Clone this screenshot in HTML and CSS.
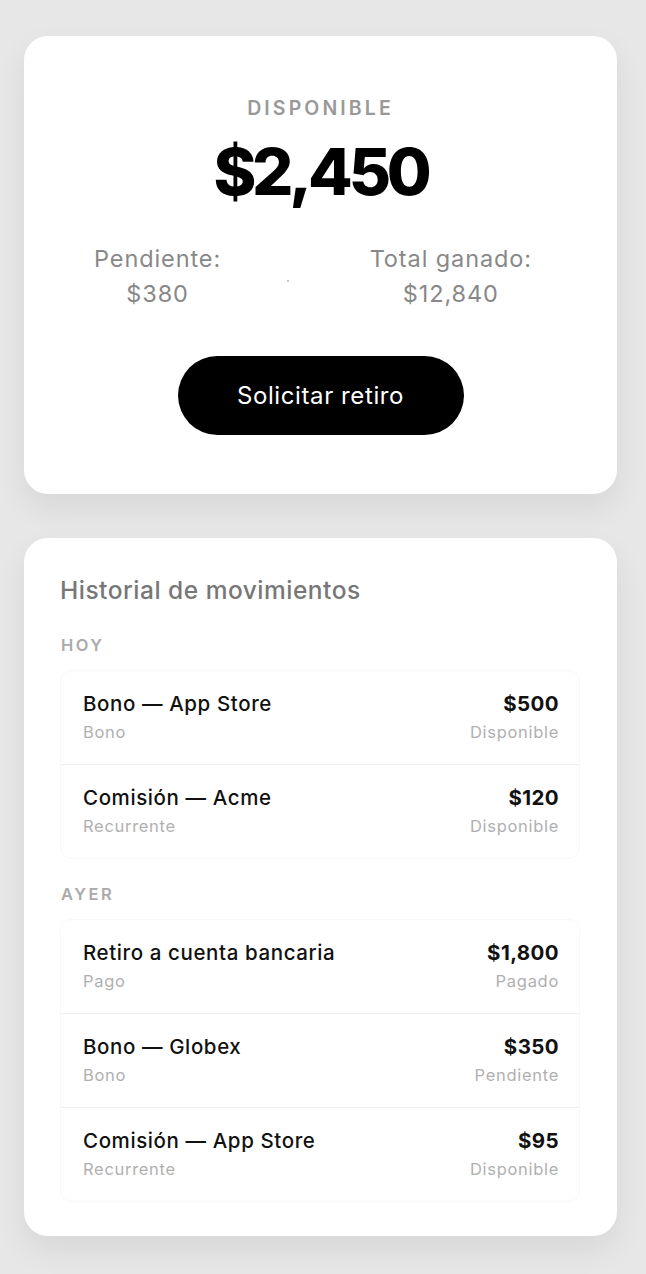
FILE: index.html
```html
<!DOCTYPE html>
<html lang="es">
<head>
  <meta charset="UTF-8" />
  <title>Saldo – Retiros</title>
  <link rel="stylesheet" href="styles.css">
</head>
<body>

  <!-- BALANCE CARD -->
  <section class="card balance-card">
    <p class="balance-label">DISPONIBLE</p>
    <h1 class="balance-amount">$2,450</h1>
    <div class="stats">
      <div class="stat">
        <span>Pendiente:</span>
        <span>$380</span>
      </div>
      <span class="stat-dot"></span>
      <div class="stat">
        <span>Total ganado:</span>
        <span>$12,840</span>
      </div>
    </div>
    <button class="withdraw-btn">Solicitar retiro</button>
  </section>

  <!-- HISTORY CARD -->
  <section class="card history-card">
    <h2 class="history-title">Historial de movimientos</h2>

    <p class="group-label">HOY</p>
    <ul class="movements">
      <li class="movement">
        <div class="movement-info">
          <span class="movement-name">Bono — App Store</span>
          <span class="movement-meta">Bono</span>
        </div>
        <div class="movement-amount">
          <span class="amount">$500</span>
          <span class="movement-meta">Disponible</span>
        </div>
      </li>
      <li class="movement">
        <div class="movement-info">
          <span class="movement-name">Comisión — Acme</span>
          <span class="movement-meta">Recurrente</span>
        </div>
        <div class="movement-amount">
          <span class="amount">$120</span>
          <span class="movement-meta">Disponible</span>
        </div>
      </li>
    </ul>

    <p class="group-label">AYER</p>
    <ul class="movements">
      <li class="movement">
        <div class="movement-info">
          <span class="movement-name">Retiro a cuenta bancaria</span>
          <span class="movement-meta">Pago</span>
        </div>
        <div class="movement-amount">
          <span class="amount">$1,800</span>
          <span class="movement-meta">Pagado</span>
        </div>
      </li>
      <li class="movement">
        <div class="movement-info">
          <span class="movement-name">Bono — Globex</span>
          <span class="movement-meta">Bono</span>
        </div>
        <div class="movement-amount">
          <span class="amount">$350</span>
          <span class="movement-meta">Pendiente</span>
        </div>
      </li>
      <li class="movement">
        <div class="movement-info">
          <span class="movement-name">Comisión — App Store</span>
          <span class="movement-meta">Recurrente</span>
        </div>
        <div class="movement-amount">
          <span class="amount">$95</span>
          <span class="movement-meta">Disponible</span>
        </div>
      </li>
    </ul>
  </section>

</body>
</html>
```

FILE: styles.css
```css
/* BASIC RESET & BODY */
* {
  margin: 0;
  padding: 0;
  box-sizing: border-box;
}
body {
  font-family: Inter, "Noto Sans", sans-serif;
  background-color: #e7e7e7;
  color: #111;
  padding: 36px 29px 38px 24px;
  display: flex;
  flex-direction: column;
  gap: 44px;
}

/* CARDS */
.card {
  background: #fff;
  border-radius: 24px;
  box-shadow: 0 14px 32px rgba(0,0,0,0.07);
}

/* BALANCE CARD */
.balance-card {
  padding: 59px 36px 59px;
  display: flex;
  flex-direction: column;
  align-items: center;
  text-align: center;
}
.balance-label {
  font-size: 19.5px;
  line-height: 26px;
  font-weight: 600;
  letter-spacing: 3.1px;
  color: #999;
}
.balance-amount {
  font-size: 65px;
  line-height: 72px;
  font-weight: 800;
  letter-spacing: -4.2px;
  color: #000;
  margin-top: 15px;
}
.stats {
  align-self: stretch;
  display: flex;
  align-items: center;
  justify-content: space-between;
  padding: 0 49px 0 34px;
  margin-top: 33px;
}
.stat {
  display: flex;
  flex-direction: column;
  align-items: center;
  font-size: 23.5px;
  line-height: 35px;
  letter-spacing: 0.9px;
  color: #888;
}
.stat-dot {
  width: 2px;
  height: 2px;
  background: #c8c8c8;
  margin: 10px 15px 0 0;
}
.withdraw-btn {
  margin-top: 45px;
  width: 286px;
  height: 79px;
  border: none;
  border-radius: 40px;
  background: #000;
  color: #fff;
  font-family: inherit;
  font-size: 24px;
  font-weight: 400;
  letter-spacing: 0.6px;
  cursor: pointer;
}

/* HISTORY CARD */
.history-card {
  padding: 36px 37px 34px 36px;
}
.history-title {
  font-size: 24.5px;
  line-height: 32px;
  font-weight: 500;
  letter-spacing: 0.5px;
  color: #777;
}
.group-label {
  font-size: 16.5px;
  line-height: 22px;
  font-weight: 600;
  letter-spacing: 2.5px;
  color: #aaa;
  margin: 24px 0 14px 1px;
}
.history-title + .group-label {
  margin-top: 28px;
}
.movements {
  list-style: none;
  border: 1px solid #f8f8f8;
  border-radius: 12px;
}
.movement {
  display: flex;
  justify-content: space-between;
  padding: 20px 20px 21px 22px;
  border-bottom: 1px solid #f0f0f0;
}
.movement:last-child {
  border-bottom: none;
}
.movement-info,
.movement-amount {
  display: flex;
  flex-direction: column;
  gap: 4px;
}
.movement-amount {
  align-items: flex-end;
}
.movement-name {
  font-size: 20.5px;
  line-height: 26px;
  font-weight: 500;
  letter-spacing: 0.6px;
  color: #111;
}
.amount {
  font-size: 20.5px;
  line-height: 26px;
  font-weight: 700;
  letter-spacing: 0.4px;
  color: #111;
}
.movement-meta {
  font-size: 16.5px;
  line-height: 22px;
  letter-spacing: 0.7px;
  color: #b0b0b0;
}
```
